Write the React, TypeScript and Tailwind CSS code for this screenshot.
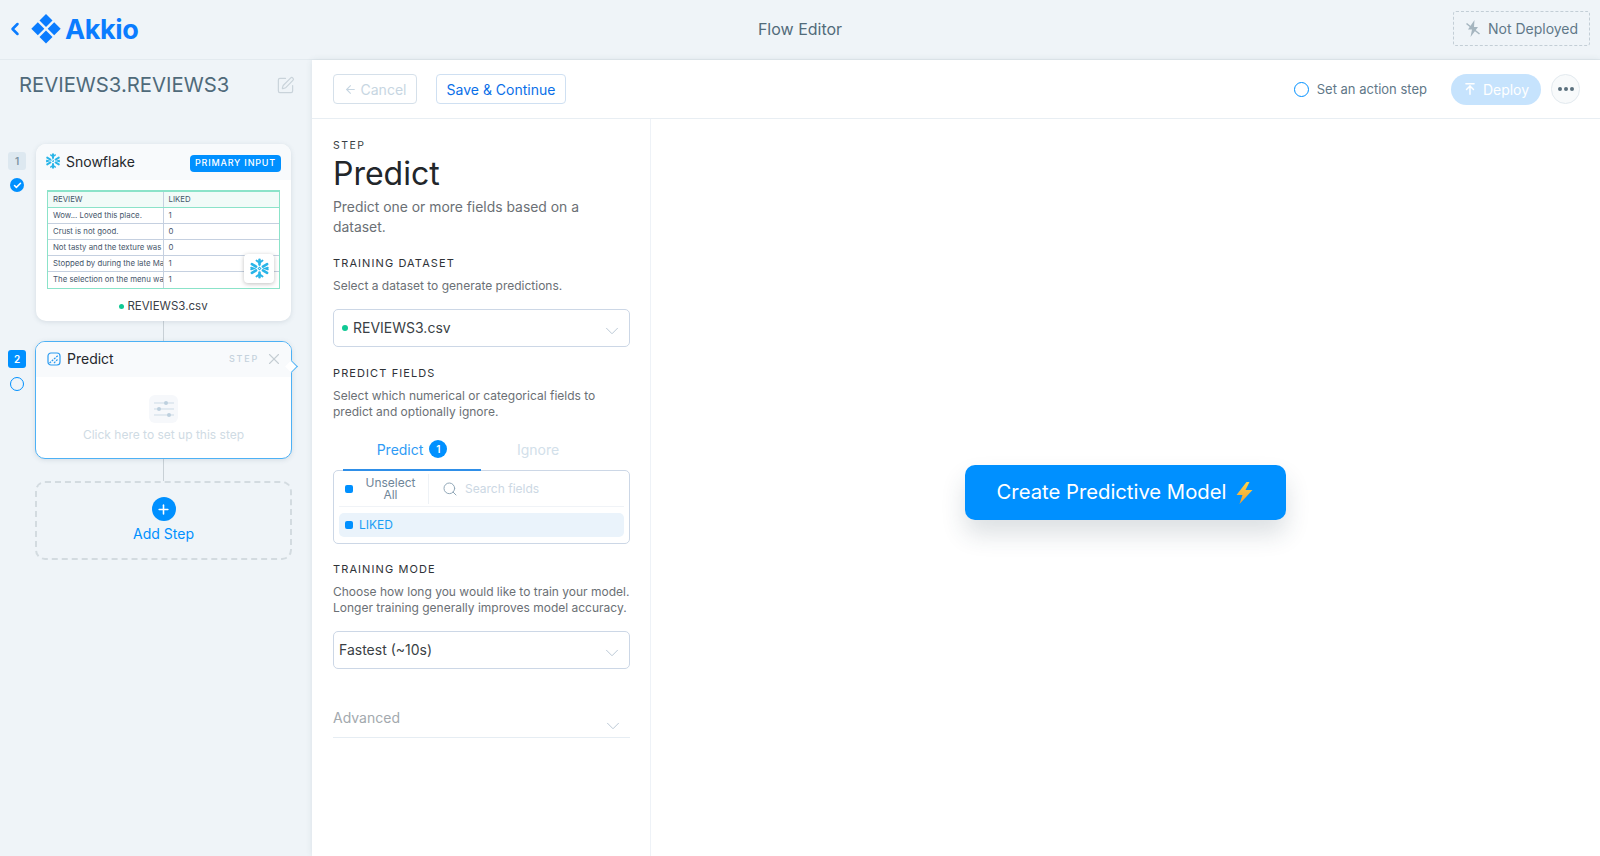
import React from "react";
import { ChevronDown, ChevronLeft, Search, SquarePen, X, Plus, ArrowLeft, ArrowUpToLine, Check } from "lucide-react";

const rows = [
  ["Wow... Loved this place.", "1"],
  ["Crust is not good.", "0"],
  ["Not tasty and the texture was", "0"],
  ["Stopped by during the late Ma", "1"],
  ["The selection on the menu wa", "1"],
];

const SnowflakeIcon = ({ size = 16 }: { size?: number }) => (
  <svg width={size} height={size} viewBox="0 0 24 24" fill="none" stroke="#29b5e8" strokeWidth="3" strokeLinecap="round">
    <path d="M12 2v5.5M12 16.5V22M3.3 7l4.8 2.8M15.9 14.2l4.8 2.8M3.3 17l4.8-2.8M15.9 9.8l4.8-2.8" />
    <path d="M8.5 2.8 12 5.5l3.5-2.7M8.5 21.2 12 18.5l3.5 2.7M2.5 11l3 1-3 1M21.5 11l-3 1 3 1" strokeWidth="2" />
    <path d="M12 10.5 13.5 12 12 13.5 10.5 12Z" strokeWidth="1.2" />
  </svg>
);

const AkkioLogo = () => (
  <svg width="30" height="30" viewBox="0 0 30 30" fill="#0a7cff">
    <path d="M15 0 21.5 6.5 15 13 8.5 6.5Z" />
    <path d="M6.8 8.2 13.3 14.7 6.8 21.2.3 14.7Z" />
    <path d="M23.2 8.2 29.7 14.7 23.2 21.2 16.7 14.7Z" />
    <path d="M15 16.6 21.5 23.1 15 29.6 8.5 23.1Z" />
  </svg>
);

const SectionLabel = ({ children }: { children: React.ReactNode }) => (
  <div className="text-[11px] leading-4 tracking-[0.1em] font-normal text-[#2f3338]">{children}</div>
);

const Selected = () => <span className="block w-2 h-2 rounded-[2px] bg-[#0090ff]" />;

const StepNumber = ({ n, active }: { n: number; active?: boolean }) => (
  <div
    className={
      "w-[18px] h-[18px] rounded-[3px] flex items-center justify-center text-[10px] font-semibold " +
      (active ? "bg-[#0090ff] text-white" : "bg-[#dde8f0] text-[#7d93a3]")
    }
  >
    {n}
  </div>
);

const App = () => {
  return (
    <div className="w-[1600px] h-[856px] overflow-hidden flex flex-col bg-[#eff4f8] font-['Inter',sans-serif]">
      {/* Top bar */}
      <header className="h-[60px] shrink-0 flex items-center pl-[6px] pr-[10px] border-b border-[#e3eaef]">
        <div className="flex-1 flex items-center -mt-[1px] pr-[4px]">
          <ChevronLeft size={20} strokeWidth={3} className="text-[#0a7cff] -ml-[1px]" />
          <div className="ml-[6px]">
            <AkkioLogo />
          </div>
          <span className="ml-[4px] text-[27px] leading-none font-bold text-[#0a7cff] tracking-[-0.015em]">Akkio</span>
        </div>
        <span className="text-[16px] font-normal text-[#526b7a] -mt-[2px]">Flow Editor</span>
        <div className="flex-1 flex justify-end">
          <div className="w-[137px] h-[35px] -mt-[3px] border border-dashed border-[#c3ced6] rounded-[3px] flex items-center justify-center gap-[7px] text-[14px] text-[#5f7888]">
            <svg width="16" height="17" viewBox="0 0 16 17" fill="#a5b5bf">
              <path d="M9.5 0 3 9.5h4l-1.5 7.5L13 7H9Z" />
              <path d="M1.5 3.5 14.5 14" stroke="#a5b5bf" strokeWidth="1.5" />
            </svg>
            Not Deployed
          </div>
        </div>
      </header>

      <div className="flex-1 flex min-h-0">
        {/* Flow sidebar */}
        <aside className="w-[312px] shrink-0 pt-[8px] pl-2">
          <div className="flex items-center justify-between pl-[11px] pr-[17px] h-[34px]">
            <h1 className="text-[20.3px] font-normal text-[#4f6a7a]">REVIEWS3.REVIEWS3</h1>
            <SquarePen size={19} strokeWidth={1.5} className="text-[#c9d3da]" />
          </div>

          <div className="flex mt-[42px] gap-[10px]">
            <div className="w-[18px] pt-[8px] flex flex-col items-center gap-[8px]">
              <StepNumber n={1} />
              <span className="w-[14px] h-[14px] rounded-full bg-[#0090ff] flex items-center justify-center">
                <Check size={9} strokeWidth={4} className="text-white" />
              </span>
            </div>
            <div className="w-[255px] h-[177px] rounded-[10px] bg-white shadow-[0_1px_5px_rgba(60,90,110,0.15)] overflow-hidden">
              <div className="h-[36px] bg-[#f8fafc] flex items-center pl-[9px] pr-[10px] pb-[2px]">
                <SnowflakeIcon />
                <span className="ml-[5px] text-[14px] font-normal text-[#25282c]">Snowflake</span>
                <span className="ml-auto mt-[4px] h-[17px] px-[5px] rounded-[4px] bg-[#0090ff] text-white text-[9px] font-medium tracking-[0.09em] flex items-center">
                  PRIMARY INPUT
                </span>
              </div>
              <div className="relative mx-[11px] mt-[10px] border border-[#8be3c9] border-t-2 text-[7.8px] text-[#46566b]">
                <div className="grid grid-cols-2 h-[16px] bg-[#f1fbf8] items-center border-b border-[#8be3c9]">
                  <span className="pl-[5px] h-full flex items-center border-r border-[#c5d0e0]">REVIEW</span>
                  <span className="pl-[5px]">LIKED</span>
                </div>
                {rows.map(([review, liked], i) => (
                  <div key={review} className={"grid grid-cols-2 h-[16px] items-center " + (i < 4 ? "border-b border-[#c5d0e0]" : "")}>
                    <span className="pl-[5px] h-full flex items-center whitespace-nowrap overflow-hidden border-r border-[#c5d0e0]">{review}</span>
                    <span className="pl-[5px]">{liked}</span>
                  </div>
                ))}
                <div className="absolute right-[5px] bottom-[5px] w-[30px] h-[29px] rounded-[4px] bg-white shadow-[0_1px_4px_rgba(0,0,0,0.25)] flex items-center justify-center">
                  <SnowflakeIcon size={21} />
                </div>
              </div>
              <div className="mt-[9px] flex items-center justify-center gap-[3px] text-[11.5px] text-[#3a4047]">
                <span className="w-[5px] h-[5px] rounded-full bg-[#10c994]" />
                REVIEWS3.csv
              </div>
            </div>
          </div>

          <div className="w-px h-[20px] bg-[#c8d0d6] ml-[155px]" />

          <div className="flex gap-[9px]">
            <div className="w-[18px] pt-[9px] flex flex-col items-center gap-[9px]">
              <StepNumber n={2} active />
              <span className="w-[14px] h-[14px] rounded-full border-[1.5px] border-[#0090ff]" />
            </div>
            <div className="relative w-[257px] h-[118px]">
              <div className="h-full rounded-[10px] bg-white border border-[#4db1f5] shadow-[0_1px_5px_rgba(60,90,110,0.15)] overflow-hidden">
                <div className="h-[35px] bg-[#f8fafc] flex items-center pl-[11px] pr-[8px] pb-[2px]">
                  <svg width="14" height="14" viewBox="0 0 14 14" fill="none" stroke="#2b9bf0" strokeWidth="1.2">
                    <rect x="1" y="1" width="12" height="12" rx="3" />
                    <path d="M2.5 11 11 3.5M7 11l3.5-3.5" strokeDasharray="2 1" />
                  </svg>
                  <span className="ml-[6px] text-[14px] font-normal text-[#25282c]">Predict</span>
                  <span className="ml-auto text-[9px] font-medium tracking-[0.2em] text-[#c5d2dc]">STEP</span>
                  <X size={18} strokeWidth={1.5} className="ml-[6px] text-[#c5cdd3]" />
                </div>
                <div className="flex flex-col items-center pt-[18px]">
                  <div className="w-[29px] h-[28px] rounded-[6px] bg-[#f6f8fb] flex items-center justify-center">
                    <svg width="22" height="18" viewBox="0 0 22 18" fill="none" stroke="#cddbe6" strokeWidth="1">
                      <path d="M1 3h20M1 9h20M1 15h20" />
                      <circle cx="13" cy="3" r="2" fill="#bdd0de" stroke="none" />
                      <circle cx="6" cy="9" r="2" fill="#bdd0de" stroke="none" />
                      <circle cx="16" cy="15" r="2" fill="#bdd0de" stroke="none" />
                    </svg>
                  </div>
                  <span className="mt-[3px] text-[12px] text-[#cfdbe4]">Click here to set up this step</span>
                </div>
              </div>
              <span className="absolute -right-[4px] top-[21px] w-[9px] h-[9px] rotate-45 bg-white border-t border-r border-[#4db1f5]" />
            </div>
          </div>

          <div className="w-px h-[22px] bg-[#c8d0d6] ml-[155px]" />

          <div className="ml-[27px] w-[257px] h-[79px] rounded-[10px] border-2 border-dashed border-[#d3dbe0] flex flex-col items-center pt-[14px]">
            <span className="w-6 h-6 rounded-full bg-[#0090ff] flex items-center justify-center">
              <Plus size={15} strokeWidth={2.5} className="text-white" />
            </span>
            <span className="mt-[2px] text-[14px] text-[#0090ff]">Add Step</span>
          </div>
        </aside>

        {/* Main panel */}
        <main className="flex-1 flex flex-col bg-white shadow-[0_0_6px_rgba(60,90,110,0.12)]">
          <div className="h-[59px] shrink-0 flex items-center pl-[21px] pr-[20px] border-b border-[#e8eef3]">
            <button className="w-[84px] h-[30px] rounded-[4px] border border-[#d5e0ea] flex items-center justify-center gap-[4px] text-[14px] text-[#c7d6e2]">
              <ArrowLeft size={13} />
              Cancel
            </button>
            <button className="ml-[19px] w-[130px] h-[30px] rounded-[4px] border border-[#cfe0f2] text-[14px] text-[#0a6fe8]">
              Save &amp; Continue
            </button>
            <span className="ml-auto w-[15px] h-[15px] rounded-full border-[1.5px] border-[#0090ff]" />
            <span className="ml-[8px] text-[13px] text-[#5f7888] mt-[1px]">Set an action step</span>
            <button className="ml-[24px] w-[90px] h-[31px] rounded-full bg-[#c6e3fd] flex items-center justify-center gap-[6px] text-[14px] text-white">
              <ArrowUpToLine size={14} strokeWidth={2.5} />
              Deploy
            </button>
            <button className="ml-[10px] w-[29px] h-[30px] rounded-full bg-[#f8fafb] border border-[#e3eaef] flex items-center justify-center gap-[2px]">
              <span className="w-[4px] h-[4px] rounded-full bg-[#5a6f7d]" />
              <span className="w-[4px] h-[4px] rounded-full bg-[#5a6f7d]" />
              <span className="w-[4px] h-[4px] rounded-full bg-[#5a6f7d]" />
            </button>
          </div>

          <div className="flex-1 flex min-h-0">
            {/* Step form */}
            <section className="w-[339px] shrink-0 border-r border-[#eef2f7] pl-[21px] pr-[20px] pt-[19px]">
              <div className="text-[10.5px] leading-4 tracking-[0.14em] font-normal text-[#3a3f45]">STEP</div>
              <h2 className="text-[32px] leading-[40px] font-normal text-[#22262a]">Predict</h2>
              <p className="mt-[3px] text-[13.9px] leading-[20px] text-[#6b7075]">
                Predict one or more fields based on a dataset.
              </p>

              <div className="mt-[18px]">
                <SectionLabel>TRAINING DATASET</SectionLabel>
              </div>
              <p className="mt-[7px] text-[12px] leading-4 text-[#6b7075]">Select a dataset to generate predictions.</p>
              <div className="mt-[15px] h-[38px] rounded-[5px] border border-[#ccd7e6] flex items-center pl-[8px] pr-[6px] text-[14px] text-[#3a3f45]">
                <span className="w-[6px] h-[6px] rounded-full bg-[#10c994] mr-[5px]" />
                <span className="-mt-[2px]">REVIEWS3.csv</span>
                <ChevronDown size={22} strokeWidth={1} className="ml-auto mt-[5px] text-[#b5c4d2]" />
              </div>

              <div className="mt-[18px]">
                <SectionLabel>PREDICT FIELDS</SectionLabel>
              </div>
              <p className="mt-[7px] text-[12px] leading-4 text-[#6b7075]">
                Select which numerical or categorical fields to predict and optionally ignore.
              </p>

              <div className="mt-[15px] flex text-[14px] h-[36px]">
                <div className="ml-[10px] w-[138px] flex items-start justify-center gap-[6px] pt-[4px] border-b-2 border-[#2f8fe8] text-[#2f9bf5]">
                  Predict
                  <span className="mt-[1px] w-[18px] h-[18px] rounded-full bg-[#0090ff] text-white text-[10px] font-semibold flex items-center justify-center">1</span>
                </div>
                <div className="w-[114px] text-center pt-[4px] text-[#d2e0ea]">Ignore</div>
              </div>
              <div className="h-[74px] -mt-[1px] rounded-[5px] border border-[#ccd7e6] px-[5px]">
                <div className="h-[36px] flex items-center border-b border-[#f0f3f7]">
                  <span className="ml-[6px]">
                    <Selected />
                  </span>
                  <div className="w-[76px] h-[30px] flex items-center justify-center text-center text-[12px] leading-[12px] text-[#6f8699] border-r border-[#eef2f6]">
                    Unselect
                    <br />
                    All
                  </div>
                  <Search size={16} strokeWidth={1.5} className="ml-[13px] text-[#92a8b8]" />
                  <span className="ml-[7px] text-[12px] text-[#ccd8e4]">Search fields</span>
                </div>
                <div className="mt-[6px] h-[24px] rounded-[5px] bg-[#eaf3fb] flex items-center pl-[6px] gap-[6px] text-[12px] text-[#1a9df5]">
                  <Selected />
                  LIKED
                </div>
              </div>

              <div className="mt-[17px]">
                <SectionLabel>TRAINING MODE</SectionLabel>
              </div>
              <p className="mt-[7px] text-[12px] leading-4 text-[#6b7075] whitespace-nowrap">
                Choose how long you would like to train your model.
                <br />
                Longer training generally improves model accuracy.
              </p>
              <div className="mt-[15px] h-[38px] rounded-[5px] border border-[#ccd7e6] flex items-center pl-[5px] pr-[6px] text-[14px] text-[#3a3f45]">
                <span className="-mt-[2px]">Fastest (~10s)</span>
                <ChevronDown size={22} strokeWidth={1} className="ml-auto mt-[5px] text-[#b5c4d2]" />
              </div>

              <div className="mt-[38px] h-[31px] flex items-start border-b border-[#e6edf3] text-[14px] text-[#a3a9ae]">
                Advanced
                <ChevronDown size={22} strokeWidth={1} className="ml-auto mr-[6px] mt-[8px] text-[#b5c4d2]" />
              </div>
            </section>

            {/* Canvas */}
            <section className="flex-1 flex items-center justify-center pt-[10px]">
              <button className="w-[321px] h-[55px] rounded-[10px] bg-[#0090ff] text-white text-[20.25px] flex items-center justify-center gap-[9px] shadow-[0_14px_24px_rgba(40,60,80,0.16)]">
                Create Predictive Model
                <svg width="19" height="22" viewBox="0 0 18 22" aria-hidden="true">
                  <defs>
                    <linearGradient id="bolt" x1="0" y1="0" x2="0" y2="1">
                      <stop offset="0" stopColor="#fcd34d" />
                      <stop offset="1" stopColor="#f59e2c" />
                    </linearGradient>
                  </defs>
                  <path d="M11 0 1 13h6l-3 9 13-14h-7l4-8Z" fill="url(#bolt)" />
                </svg>
              </button>
            </section>
          </div>
        </main>
      </div>
    </div>
  );
};

export default App;
